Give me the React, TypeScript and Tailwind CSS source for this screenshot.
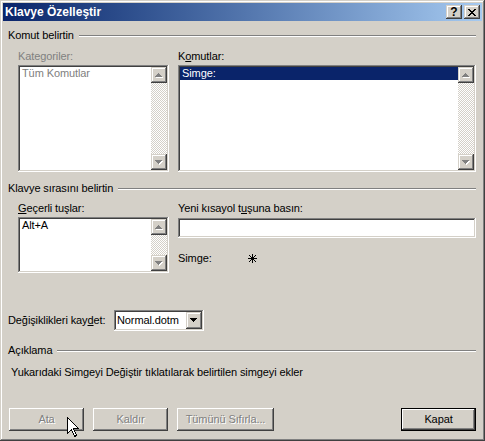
import React from "react";

// Classic Windows 3D edges, done with inset shadows
const raisedPush =
  "shadow-[inset_-1px_-1px_#404040,inset_1px_1px_#ffffff,inset_-2px_-2px_#808080,inset_2px_2px_#d4d0c8]";
const raisedSmall =
  "shadow-[inset_-1px_-1px_#404040,inset_1px_1px_#d4d0c8,inset_-2px_-2px_#808080,inset_2px_2px_#ffffff]";
const sunken =
  "shadow-[inset_-1px_-1px_#ffffff,inset_1px_1px_#808080,inset_-2px_-2px_#d4d0c8,inset_2px_2px_#404040]";

const Arrow = ({
  dir,
  disabled,
}: {
  dir: "up" | "down";
  disabled?: boolean;
}) => {
  const rows = [0, 1, 2, 3];
  const shape = (dx: number, dy: number, fill: string) =>
    rows.map((i) => (
      <rect
        key={`${fill}-${i}`}
        x={3 - i + dx}
        y={(dir === "up" ? i : 3 - i) + dy}
        width={1 + 2 * i}
        height={1}
        fill={fill}
      />
    ));
  return (
    <svg width="8" height="5" viewBox="0 0 8 5" shapeRendering="crispEdges">
      {disabled && shape(1, 1, "#ffffff")}
      {shape(0, 0, disabled ? "#808080" : "#000000")}
    </svg>
  );
};

const ScrollBar = () => (
  <div className="w-4 h-full flex flex-col">
    <div className={`w-4 h-4 bg-[#d4d0c8] flex items-center justify-center ${raisedSmall}`}>
      <Arrow dir="up" disabled />
    </div>
    <div className="flex-1 bg-[repeating-conic-gradient(#ffffff_0%_25%,#d4d0c8_0%_50%)] bg-[length:2px_2px]" />
    <div className={`w-4 h-4 bg-[#d4d0c8] flex items-center justify-center ${raisedSmall}`}>
      <Arrow dir="down" disabled />
    </div>
  </div>
);

const ListBox = ({
  height,
  children,
}: {
  height: string;
  children?: React.ReactNode;
}) => (
  <div className={`${height} bg-white p-[2px] ${sunken}`}>
    <div className="h-full flex bg-white">
      <div className="flex-1 flex flex-col">{children}</div>
      <ScrollBar />
    </div>
  </div>
);

const GroupHeader = ({ title }: { title: string }) => (
  <div className="h-[13px] pl-[5px] pr-[6px] flex items-center gap-[5px]">
    <span className="whitespace-nowrap">{title}</span>
    <div className="flex-1 h-[2px] border-t border-t-[#808080] border-b border-b-white" />
  </div>
);

const PushButton = ({
  label,
  width,
  disabled,
  isDefault,
}: {
  label: string;
  width: string;
  disabled?: boolean;
  isDefault?: boolean;
}) => (
  <div
    className={`${width} h-[23px] ${isDefault ? "border border-black" : ""}`}
  >
    <div
      className={`h-full bg-[#d4d0c8] flex items-center justify-center ${raisedPush} ${
        disabled ? "text-[#808080] [text-shadow:1px_1px_0_#ffffff]" : "text-black"
      }`}
    >
      {label}
    </div>
  </div>
);

const CloseGlyph = () => {
  // pixel X, 2px wide strokes
  const rows = [0, 1, 2, 3, 4, 5, 6];
  return (
    <svg width="8" height="7" viewBox="0 0 8 7" shapeRendering="crispEdges">
      {rows.map((r) => (
        <React.Fragment key={r}>
          <rect x={r} y={r} width={2} height={1} fill="#000" />
          <rect x={6 - r} y={r} width={2} height={1} fill="#000" />
        </React.Fragment>
      ))}
    </svg>
  );
};

const Cursor = () => (
  <svg
    className="absolute left-[67px] top-[417px]"
    width="13"
    height="21"
    viewBox="0 0 13 21"
    shapeRendering="crispEdges"
  >
    <path
      d="M0.5 0.5 L0.5 16.5 L4.5 12.5 L7.5 19.5 L9.5 18.5 L6.5 11.5 L11.5 11.5 Z"
      fill="#ffffff"
      stroke="#000000"
      strokeWidth="1"
    />
  </svg>
);

export default function App() {
  return (
    <div className="relative w-[485px] h-[441px] bg-[#d4d0c8] p-[3px] flex flex-col text-[11px] leading-[13px] tracking-[-0.1px] text-black [font-family:'Liberation_Sans',Arial,sans-serif] shadow-[inset_-1px_-1px_#404040,inset_1px_1px_#d4d0c8,inset_-2px_-2px_#808080,inset_2px_2px_#ffffff] overflow-hidden select-none">
      {/* Title bar */}
      <div className="h-[18px] flex items-center bg-linear-to-r from-[#0a246a] to-[#a6caf0] pl-[2px] pr-[2px]">
        <span className="text-white font-bold text-[12px] tracking-normal flex-1">
          Klavye Özelleştir
        </span>
        <div className={`w-4 h-[14px] bg-[#d4d0c8] flex items-center justify-center font-bold text-[12px] leading-none tracking-normal ${raisedSmall}`}>
          ?
        </div>
        <div className={`w-4 h-[14px] ml-[2px] bg-[#d4d0c8] flex items-center justify-center ${raisedSmall}`}>
          <CloseGlyph />
        </div>
      </div>

      {/* Body */}
      <div className="flex-1 flex flex-col pt-[8px] pb-[7px]">
        <GroupHeader title="Komut belirtin" />

        <div className="mt-[8px] pl-[15px] pr-[6px] grid grid-cols-[151px_298px] gap-x-[9px]">
          <div>
            <div className="h-[13px] text-[#808080]">Kategoriler:</div>
            <div className="mt-[2px]">
              <ListBox height="h-[107px]">
                <div className="h-[13px] pl-[2px] text-[#808080]">Tüm Komutlar</div>
              </ListBox>
            </div>
          </div>
          <div>
            <div className="h-[13px]">
              K<span className="underline">o</span>mutlar:
            </div>
            <div className="mt-[2px]">
              <ListBox height="h-[107px]">
                <div className="h-[13px] pl-[2px] bg-[#0a246a] text-white">Simge:</div>
              </ListBox>
            </div>
          </div>
        </div>

        <div className="mt-[10px]">
          <GroupHeader title="Klavye sırasını belirtin" />
        </div>

        <div className="mt-[7px] pl-[15px] pr-[6px] grid grid-cols-[151px_298px] gap-x-[9px]">
          <div>
            <div className="h-[13px]">
              <span className="underline">G</span>eçerli tuşlar:
            </div>
            <div className="mt-[2px]">
              <ListBox height="h-[56px]">
                <div className="h-[13px] pl-[2px]">Alt+A</div>
              </ListBox>
            </div>
          </div>
          <div>
            <div className="h-[13px]">
              Yeni kısayol t<span className="underline">u</span>şuna basın:
            </div>
            <div className={`mt-[3px] h-[20px] bg-white ${sunken}`} />
            <div className="mt-[14px] h-[13px] flex items-center">
              <span className="w-[70px]">Simge:</span>
              <svg width="9" height="9" viewBox="0 0 9 9" shapeRendering="crispEdges">
                <rect x="4" y="0" width="1" height="9" fill="#000" />
                <rect x="0" y="4" width="9" height="1" fill="#000" />
                <path d="M1 1 L8 8 M8 1 L1 8" stroke="#000" strokeWidth="1.2" />
                <rect x="3" y="3" width="3" height="3" fill="#000" />
              </svg>
            </div>
          </div>
        </div>

        {/* Save target */}
        <div className="mt-[37px] pl-[5px] flex items-center">
          <span className="w-[106px]">
            Değişiklikleri kay<span className="underline">d</span>et:
          </span>
          <div className={`w-[90px] h-[21px] bg-white p-[2px] flex ${sunken}`}>
            <div className="flex-1 pl-[1px] flex items-center">Normal.dotm</div>
            <div className={`w-4 h-[17px] bg-[#d4d0c8] flex items-center justify-center ${raisedSmall}`}>
              <Arrow dir="down" />
            </div>
          </div>
        </div>

        <div className="mt-[13px]">
          <GroupHeader title="Açıklama" />
        </div>
        <div className="mt-[9px] pl-[8px] h-[13px]">
          Yukarıdaki Simgeyi Değiştir tıklatılarak belirtilen simgeyi ekler
        </div>

        {/* Buttons */}
        <div className="mt-auto pl-[6px] pr-[6px] flex items-center">
          <PushButton label="Ata" width="w-[75px]" disabled />
          <div className="ml-[9px]">
            <PushButton label="Kaldır" width="w-[75px]" disabled />
          </div>
          <div className="ml-[9px]">
            <PushButton label="Tümünü Sıfırla..." width="w-[97px]" disabled />
          </div>
          <div className="ml-auto">
            <PushButton label="Kapat" width="w-[75px]" isDefault />
          </div>
        </div>
      </div>

      <Cursor />
    </div>
  );
}
